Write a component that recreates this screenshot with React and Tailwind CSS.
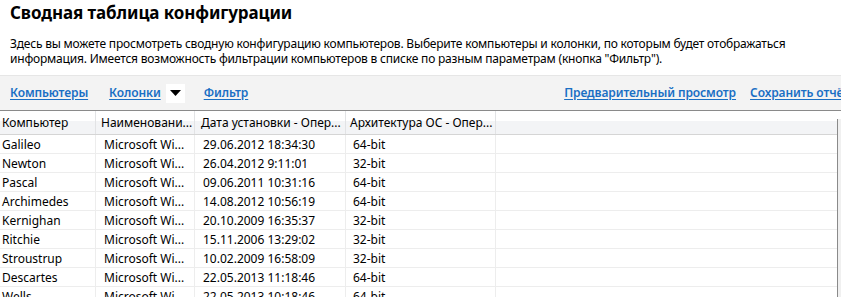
import React from 'react'

const rows = [
  ['Galileo', 'Microsoft Wi...', '29.06.2012 18:34:30', '64-bit'],
  ['Newton', 'Microsoft Wi...', '26.04.2012 9:11:01', '32-bit'],
  ['Pascal', 'Microsoft Wi...', '09.06.2011 10:31:16', '64-bit'],
  ['Archimedes', 'Microsoft Wi...', '14.08.2012 10:56:19', '64-bit'],
  ['Kernighan', 'Microsoft Wi...', '20.10.2009 16:35:37', '32-bit'],
  ['Ritchie', 'Microsoft Wi...', '15.11.2006 13:29:02', '32-bit'],
  ['Stroustrup', 'Microsoft Wi...', '10.02.2009 16:58:09', '32-bit'],
  ['Descartes', 'Microsoft Wi...', '22.05.2013 11:18:46', '64-bit'],
  ['Wells', 'Microsoft Wi...', '22.05.2013 10:18:46', '64-bit'],
]

const columns = [
  { title: 'Компьютер', w: 'w-[96px]', pad: 'pl-[2px]', hpad: 'pl-[2px]' },
  { title: 'Наименовани...', w: 'w-[99px]', pad: 'pl-[8px]', hpad: 'pl-[5px]' },
  { title: 'Дата установки - Опер...', w: 'w-[151px]', pad: 'pl-[8px]', hpad: 'pl-[6px]' },
  { title: 'Архитектура ОС - Опер...', w: 'w-[150px]', pad: 'pl-[7px]', hpad: 'pl-[4px]' },
]

function Link({ children }) {
  return (
    <a className="text-[#1a6fc4] font-semibold underline underline-offset-2 cursor-pointer whitespace-nowrap tracking-[-0.1px]">
      {children}
    </a>
  )
}

export default function App() {
  return (
    <div className="w-[841px] h-[297px] overflow-hidden bg-white text-[12px] text-black font-['Noto_Sans',sans-serif]">
      {/* Heading */}
      <div className="px-[10px] pt-[1px]">
        <h1 className="text-[17px] font-bold leading-[24px] tracking-[-0.1px]">Сводная таблица конфигурации</h1>
        <p className="mt-[11px] leading-[15px] text-[12px] tracking-[-0.2px]">
          Здесь вы можете просмотреть сводную конфигурацию компьютеров. Выберите компьютеры и колонки, по которым будет отображаться
          <br />
          информация. Имеется возможность фильтрации компьютеров в списке по разным параметрам (кнопка "Фильтр").
        </p>
      </div>

      {/* Toolbar */}
      <div className="mt-[9px] h-[36px] flex items-center bg-[#f3f3f3] border-t border-[#e6e6e6] border-b border-b-[#8a8a8a] pl-[10px] text-[12px]">
        <Link>Компьютеры</Link>
        <div className="ml-[21px] flex items-center">
          <Link>Колонки</Link>
          <div className="ml-[5px] w-[19px] h-[19px] bg-white flex items-center justify-center">
            <svg width="11" height="6" viewBox="0 0 11 6">
              <path d="M0 0 H11 L5.5 6 Z" fill="#000" />
            </svg>
          </div>
        </div>
        <div className="ml-[19px]">
          <Link>Фильтр</Link>
        </div>
        <div className="ml-auto flex items-center gap-[14px] -mr-[8px]">
          <Link>Предварительный просмотр</Link>
          <Link>Сохранить отчёт</Link>
        </div>
      </div>

      {/* Table */}
      <div className="flex">
        <div className="w-[837px]">
          <div className="flex h-[24px] border-b border-[#d5d5d5] bg-[linear-gradient(#ffffff_0%,#ffffff_42%,#f3f4f6_42%,#f3f4f6_100%)]">
            {columns.map((c) => (
              <div
                key={c.title}
                className={`${c.w} ${c.hpad} shrink-0 flex items-center border-r border-[#e2e3e5] whitespace-nowrap`}
              >
                {c.title}
              </div>
            ))}
            <div className="flex-1" />
          </div>
          {rows.map((r) => (
            <div key={r[0]} className="flex h-[19px] border-b border-[#ededed]">
              {r.map((v, i) => (
                <div
                  key={i}
                  className={`${columns[i].w} ${columns[i].pad} shrink-0 flex items-center pt-[1px] border-r border-[#ededed] whitespace-nowrap overflow-hidden`}
                >
                  {v}
                </div>
              ))}
              <div className="flex-1" />
            </div>
          ))}
        </div>
        <div className="flex-1 bg-[#f0f0f0] border-l border-[#8a8a8a] mt-[8px]" />
      </div>
    </div>
  )
}
